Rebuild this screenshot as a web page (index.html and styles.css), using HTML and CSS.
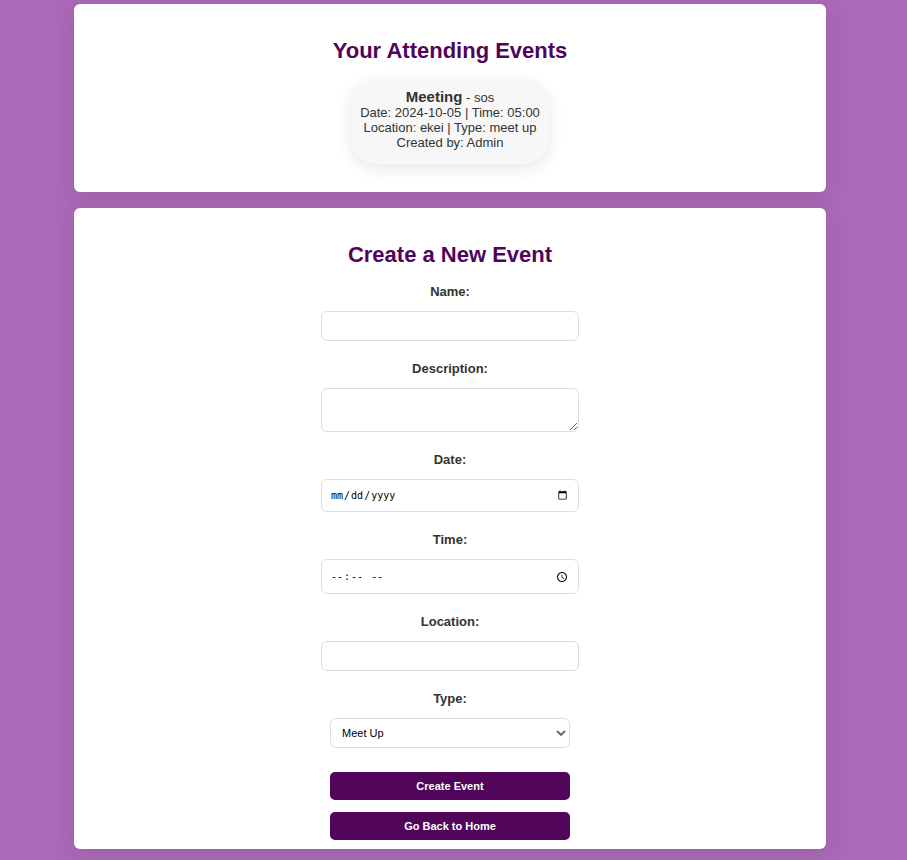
FILE: index.html
```html
<!DOCTYPE html>
<html lang="en">
<head>
<meta charset="utf-8">
<meta name="viewport" content="width=device-width, initial-scale=1">
<title>Events</title>
<link rel="stylesheet" href="styles.css">
</head>
<body>
<main class="page">
  <section class="card attending">
    <h2>Your Attending Events</h2>
    <ul class="events">
      <li class="event">
        <strong>Meeting</strong> - sos<br>
        Date: 2024-10-05 | Time: 05:00<br>
        Location: ekei | Type: meet up<br>
        Created by: Admin
      </li>
    </ul>
  </section>
  <section class="card create">
    <h2>Create a New Event</h2>
    <form class="form">
      <label for="name">Name:</label>
      <input class="field" type="text" id="name">
      <label for="description">Description:</label>
      <textarea class="field area" id="description"></textarea>
      <label for="date">Date:</label>
      <input class="field date" type="date" id="date">
      <label for="time">Time:</label>
      <input class="field time" type="time" id="time">
      <label for="location">Location:</label>
      <input class="field" type="text" id="location">
      <label for="type">Type:</label>
      <div class="picker">
        <select class="field select" id="type">
          <option>Meet Up</option>
        </select>
        <svg class="chevron" viewBox="0 0 10 6" aria-hidden="true"><path d="M1 1l4 4 4-4" fill="none" stroke="#666" stroke-width="1.8"/></svg>
      </div>
      <button class="button" type="submit">Create Event</button>
      <button class="button" type="button">Go Back to Home</button>
    </form>
  </section>
</main>
</body>
</html>
```
FILE: styles.css
```css
* {
  box-sizing: border-box;
}

body {
  margin: 0;
  background: #ab69b8;
  color: #333;
  font: 13px/15px "Liberation Sans", Arial, sans-serif;
  text-align: center;
}

.page {
  display: flex;
  flex-direction: column;
  gap: 16px;
  padding: 4px 81px 11px 74px;
}

.card {
  background: #fff;
  border-radius: 6px;
  box-shadow: 0 4px 20px rgba(0, 0, 0, 0.1);
}

.attending {
  padding: 34px 20px 28px;
}

.create {
  padding: 34px 20px 9px;
}

h2 {
  margin: 0;
  color: #50055a;
  font-size: 22px;
  line-height: 26px;
}

.events {
  display: flex;
  flex-direction: column;
  align-items: center;
  margin: 16px 0 0;
  padding: 0;
  list-style: none;
}

.event {
  padding: 8px 9px 14px;
  border-radius: 25px;
  background: #f7f7f7;
  box-shadow: 0 4px 16px rgba(0, 0, 0, 0.1);
}

.event strong {
  font-size: 15px;
  line-height: 17px;
}

.form {
  display: flex;
  flex-direction: column;
  align-items: center;
  margin-top: 16px;
}

label {
  margin-bottom: 12px;
  font-weight: bold;
}

.field {
  width: 258px;
  height: 30px;
  margin: 0 0 20px;
  padding: 8px;
  border: 1px solid #ddd;
  border-radius: 6px;
  background-color: #fff;
  color: #000;
  font: 11px "Liberation Sans", Arial, sans-serif;
}

.area {
  height: 44px;
  resize: vertical;
}

.date,
.time {
  font-family: "DejaVu Sans Mono", monospace;
  font-size: 10px;
}

.date::-webkit-calendar-picker-indicator,
.time::-webkit-calendar-picker-indicator {
  width: 12px;
  height: 12px;
  padding: 2px;
  box-sizing: content-box;
}

.date::-webkit-calendar-picker-indicator {
  width: 11px;
  height: 11px;
}

.date {
  height: 33px;
}

.time {
  height: 35px;
}

.picker {
  position: relative;
  margin-bottom: 24px;
}

.select {
  display: block;
  width: 240px;
  margin: 0;
  padding: 0 11px;
  appearance: none;
}

.chevron {
  position: absolute;
  top: 12px;
  right: 4px;
  width: 10px;
  height: 6px;
  pointer-events: none;
}

.button {
  width: 240px;
  height: 28px;
  padding: 0;
  border: 0;
  border-radius: 5px;
  background: #50055a;
  color: #fff;
  font: bold 11px "Liberation Sans", Arial, sans-serif;
}

.button + .button {
  margin-top: 12px;
}
```
